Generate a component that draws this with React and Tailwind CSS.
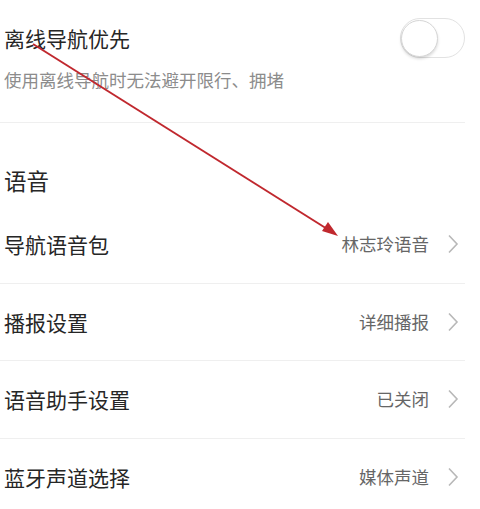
import React from "react";

const font = { fontFamily: '"Noto Sans CJK SC", "Noto Sans", sans-serif' };

function Chevron() {
  return (
    <svg width="12" height="20" viewBox="0 0 12 20" className="ml-[18px] mr-[6px] shrink-0">
      <path d="M2 1.5 L10 10 L2 18.5" fill="none" stroke="#b8b8b8" strokeWidth="1.6" />
    </svg>
  );
}

function Row({ label, value, last }) {
  return (
    <div className={"h-[77.5px] flex items-center pl-[4px] " + (last ? "" : "border-b border-[#efefef]")}>
      <div className="flex-1 text-[21px] text-[#262626] leading-[28px]">{label}</div>
      <div className="text-[17.5px] text-[#666] leading-[24px]">{value}</div>
      <Chevron />
    </div>
  );
}

export default function App() {
  return (
    <div className="relative w-[480px] h-[509px] bg-white overflow-hidden" style={font}>
      <div className="w-[465px]">
        <div className="h-[123px] border-b border-[#efefef] pl-[4px] pt-[24px] relative">
          <div className="text-[21px] text-[#262626] leading-[28px]">离线导航优先</div>
          <div className="mt-[16px] text-[17.5px] text-[#8c8c8c] leading-[24px]">使用离线导航时无法避开限行、拥堵</div>
          <div className="absolute right-0 top-[18px] w-[65px] h-[40px] rounded-full border-[1.5px] border-[#e2e2e2] bg-white">
            <div className="absolute left-[0px] top-[0.5px] w-[37px] h-[37px] rounded-full bg-white border-[1.5px] border-[#d6d6d6] shadow-[0_2px_3px_rgba(0,0,0,0.15)]" />
          </div>
        </div>
        <div className="h-[83px] flex items-end pl-[4px] pb-[12px]">
          <div className="text-[22.5px] text-[#262626] leading-[28px]">语音</div>
        </div>
        <Row label="导航语音包" value="林志玲语音" />
        <Row label="播报设置" value="详细播报" />
        <Row label="语音助手设置" value="已关闭" />
        <Row label="蓝牙声道选择" value="媒体声道" last />
      </div>
      <svg className="absolute inset-0 pointer-events-none" width="480" height="509">
        <line x1="33" y1="44" x2="332" y2="232" stroke="#c0282e" strokeWidth="2" />
        <polygon points="338,236 322,231 328,222" fill="#c0282e" />
      </svg>
    </div>
  );
}
